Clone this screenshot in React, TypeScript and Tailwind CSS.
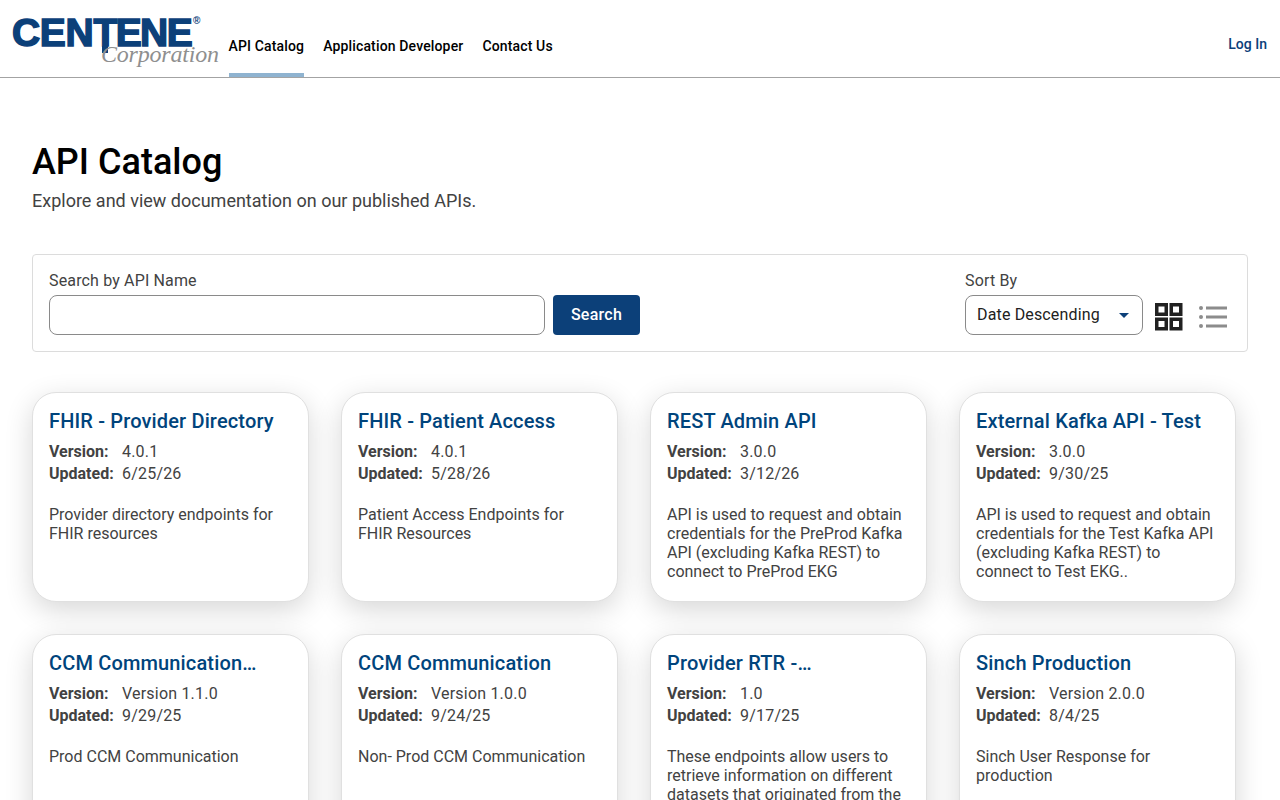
const navLinks = ["API Catalog", "Application Developer", "Contact Us"];

const apis = [
  {
    title: "FHIR - Provider Directory",
    version: "4.0.1",
    updated: "6/25/26",
    desc: "Provider directory endpoints for FHIR resources",
  },
  {
    title: "FHIR - Patient Access",
    version: "4.0.1",
    updated: "5/28/26",
    desc: "Patient Access Endpoints for FHIR Resources",
  },
  {
    title: "REST Admin API",
    version: "3.0.0",
    updated: "3/12/26",
    desc: "API is used to request and obtain credentials for the PreProd Kafka API (excluding Kafka REST) to connect to PreProd EKG",
  },
  {
    title: "External Kafka API - Test",
    version: "3.0.0",
    updated: "9/30/25",
    desc: "API is used to request and obtain credentials for the Test Kafka API (excluding Kafka REST) to connect to Test EKG..",
  },
  {
    title: "CCM Communication Production",
    version: "Version 1.1.0",
    updated: "9/29/25",
    desc: "Prod CCM Communication",
  },
  {
    title: "CCM Communication",
    version: "Version 1.0.0",
    updated: "9/24/25",
    desc: "Non- Prod CCM Communication",
  },
  {
    title: "Provider RTR - Authentication",
    version: "1.0",
    updated: "9/17/25",
    desc: "These endpoints allow users to retrieve information on different datasets that originated from the source systems",
  },
  {
    title: "Sinch Production",
    version: "Version 2.0.0",
    updated: "8/4/25",
    desc: "Sinch User Response for production",
  },
];

const Logo = () => {
  return (
    <div className="relative w-[216px] h-[77px] shrink-0">
      <span className="absolute left-[12px] top-[8px] text-[39px] leading-[50px] font-bold text-[#0c4079] font-['Liberation_Sans',sans-serif] [-webkit-text-stroke:1.5px_#0c4079]">
        <span className="tracking-[-0.3px]">CEN</span>
        <span className="tracking-[-1.6px]">TENE</span>
      </span>
      <span className="absolute left-[102px] top-[46px] w-[6px] h-[7px] bg-[#0c4079]" />
      <span className="absolute left-[193px] top-[15px] text-[10px] leading-3 font-bold text-[#0c4079] font-['Liberation_Sans',sans-serif]">
        ®
      </span>
      <span className="absolute left-[101px] top-[39px] text-[24px] leading-[30px] tracking-[-0.2px] italic text-[#8f8f8f] font-['Liberation_Serif',serif]">
        Corporation
      </span>
    </div>
  );
};

const Header = () => {
  return (
    <header className="flex h-[78px] items-stretch border-b border-[#a3a3a3] bg-white pr-[13px]">
      <Logo />
      <nav className="flex gap-[19px] ml-[12.5px]">
        {navLinks.map((link, i) => (
          <a
            key={link}
            className={`h-[77px] pt-[37px] text-sm leading-[18px] font-medium tracking-[0.15px] text-black ${
              i === 0 ? "border-b-4 border-[#8fb3d0]" : ""
            }`}
          >
            {link}
          </a>
        ))}
      </nav>
      <a className="ml-auto pt-[35px] text-sm font-medium leading-[18px] text-[#0c4079]">Log In</a>
    </header>
  );
};

const GridIcon = () => (
  <svg width="28" height="28" viewBox="0 0 28 28" fill="none" stroke="#212121" strokeWidth="3.5">
    <rect x="1.75" y="1.75" width="9.5" height="9.5" />
    <rect x="16.25" y="1.75" width="9.5" height="9.5" />
    <rect x="1.75" y="16.25" width="9.5" height="9.5" />
    <rect x="16.25" y="16.25" width="9.5" height="9.5" />
  </svg>
);

const ListIcon = () => (
  <svg width="28" height="24" viewBox="0 0 28 24" fill="#8c8c8c">
    <circle cx="2" cy="3" r="2" />
    <circle cx="2" cy="12" r="2" />
    <circle cx="2" cy="21" r="2" />
    <rect x="7" y="1.5" width="21" height="3" />
    <rect x="7" y="10.5" width="21" height="3" />
    <rect x="7" y="19.5" width="21" height="3" />
  </svg>
);

const SearchBar = () => {
  return (
    <div className="flex items-start justify-between h-[98px] mt-[41px] rounded border border-[#dcdcdc] pl-4 pr-5 pt-4">
      <div>
        <label className="block text-base leading-5 tracking-[0.15px] text-[#424242]">Search by API Name</label>
        <div className="flex gap-2 mt-[4px]">
          <input className="w-[496px] h-10 rounded-lg border border-[#8a8a8a] bg-white" />
          <button className="h-10 w-[87px] rounded bg-[#0c4079] text-base font-medium tracking-[0.25px] text-white">
            Search
          </button>
        </div>
      </div>
      <div className="flex items-end">
        <div>
          <label className="block text-base leading-5 tracking-[0.15px] text-[#424242]">Sort By</label>
          <div className="flex items-center justify-between w-[178px] h-10 mt-[4px] rounded-lg border border-[#8a8a8a] pl-[11px] pr-[13px] text-base tracking-[0.15px] text-[#212121]">
            <span>Date Descending</span>
            <span className="w-0 h-0 border-x-[5px] border-x-transparent border-t-[5px] border-t-[#0c4079]" />
          </div>
        </div>
        <div className="flex items-center gap-4 h-10 ml-3 pt-[3px]">
          <GridIcon />
          <ListIcon />
        </div>
      </div>
    </div>
  );
};

interface ApiCardProps {
  title: string;
  version: string;
  updated: string;
  desc: string;
}

const ApiCard = ({ title, version, updated, desc }: ApiCardProps) => {
  return (
    <div className="w-[277px] h-[210px] rounded-3xl border border-[#e0e0e0] bg-white px-4 pt-[14px] shadow-[0_8px_28px_rgba(0,0,0,0.16)]">
      <h2 className="line-clamp-1 text-xl leading-7 font-medium tracking-[0.15px] text-[#00447c]">{title}</h2>
      <div className="grid grid-cols-[73px_1fr] mt-[6px] text-base leading-[22px] text-[#424242]">
        <span className="font-bold">Version:</span>
        <span className="tracking-[0.2px]">{version}</span>
        <span className="font-bold">Updated:</span>
        <span className="tracking-[0.2px]">{updated}</span>
      </div>
      <p className="mt-[20px] text-base leading-[19px] text-[#424242]">{desc}</p>
    </div>
  );
};

export default function App() {
  return (
    <div className="h-screen overflow-hidden bg-white font-['Roboto',sans-serif]">
      <Header />
      <main className="px-8">
        <h1 className="mt-[62px] text-4xl leading-[44px] font-medium text-black">API Catalog</h1>
        <p className="mt-[5px] text-lg leading-6 text-[#424242]">Explore and view documentation on our published APIs.</p>
        <SearchBar />
        <div className="grid grid-cols-[repeat(4,277px)] gap-8 mt-10">
          {apis.map((api) => (
            <ApiCard key={api.title} {...api} />
          ))}
        </div>
      </main>
    </div>
  );
}
